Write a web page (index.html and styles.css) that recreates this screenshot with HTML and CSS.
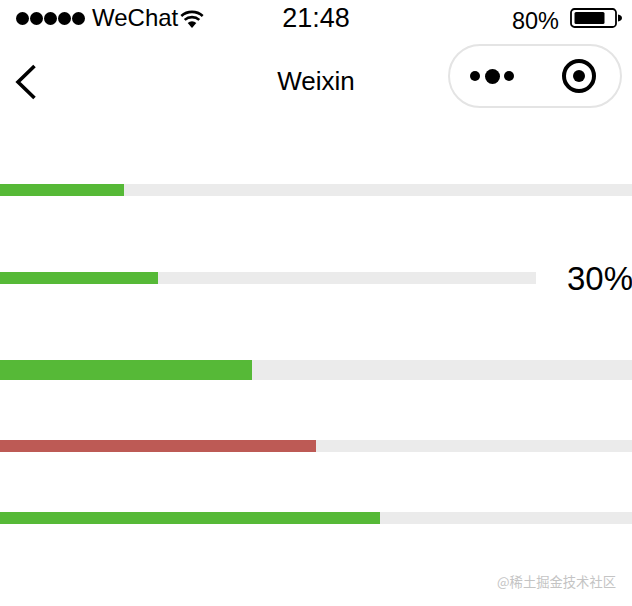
FILE: index.html
```html
<!DOCTYPE html>
<html lang="en">
<head>
  <meta charset="UTF-8" />
  <title>Weixin</title>
  <link rel="stylesheet" href="styles.css">
</head>
<body>
  <header class="status-bar">
    <div class="status-left">
      <span class="signal"><i></i><i></i><i></i><i></i><i></i></span>
      <span class="carrier">WeChat</span>
      <svg class="wifi" width="24" height="18" viewBox="0 0 24 18">
        <path d="M12 18 7.700 13a6.400 6.400 0 0 1 8.600 0z" fill="#000"/>
        <path d="M4.700 9.900a11 11 0 0 1 14.600 0M1.300 6a16 16 0 0 1 21.400 0" fill="none" stroke="#000" stroke-width="2.600"/>
      </svg>
    </div>
    <div class="status-time">21:48</div>
    <div class="status-right">
      <span class="percent">80%</span>
      <svg class="battery" width="52" height="20" viewBox="0 0 52 20">
        <rect x="1" y="1" width="45" height="18" rx="3.500" fill="none" stroke="#000" stroke-width="1.800"/>
        <rect x="4.500" y="4" width="30" height="12" rx="1.500" fill="#000"/>
        <path d="M48 6.500c2.500.4 4 1.800 4 3.500s-1.500 3.100-4 3.500z" fill="#000"/>
      </svg>
    </div>
  </header>

  <nav class="nav-bar">
    <svg class="back" width="22" height="36" viewBox="0 0 22 36">
      <path d="M19.500 2 3 18l16.500 16" fill="none" stroke="#000" stroke-width="3.600"/>
    </svg>
    <div class="nav-title">Weixin</div>
    <div class="capsule">
      <span class="dots"><i></i><i class="big"></i><i></i></span>
      <span class="target"><i></i></span>
    </div>
  </nav>

  <main class="progress-list">
    <div class="progress row-1">
      <div class="track"><div class="fill" style="width: 124px"></div></div>
    </div>
    <div class="progress row-2">
      <div class="track"><div class="fill" style="width: 158px"></div></div>
      <div class="info">30%</div>
    </div>
    <div class="progress row-3">
      <div class="track thick"><div class="fill" style="width: 252px"></div></div>
    </div>
    <div class="progress row-4">
      <div class="track"><div class="fill red" style="width: 316px"></div></div>
    </div>
    <div class="progress row-5">
      <div class="track"><div class="fill" style="width: 380px"></div></div>
    </div>
  </main>

  <div class="watermark">@稀土掘金技术社区</div>
</body>
</html>
```

FILE: styles.css
```css
html, body {
  height: 100%;
}
body {
  margin: 0;
  position: relative;
  overflow: hidden;
  background: #fff;
  color: #000;
  font-family: 'Liberation Sans', sans-serif;
}
.status-bar {
  height: 44px;
  display: grid;
  grid-template-columns: 1fr auto 1fr;
  align-items: center;
  padding: 0 10px 8px 16px;
  box-sizing: border-box;
}
.status-left {
  display: flex;
  align-items: center;
}
.signal {
  display: flex;
  gap: 1px;
}
.signal i {
  width: 13px;
  height: 13px;
  border-radius: 50%;
  background: #000;
}
.carrier {
  font-size: 24px;
  margin-left: 7px;
}
.wifi {
  margin-left: 2px;
  margin-top: 1px;
}
.status-time {
  font-size: 27px;
  margin-left: -6px;
}
.status-right {
  display: flex;
  justify-content: flex-end;
  align-items: center;
  padding-top: 3px;
}
.percent {
  font-size: 23.500px;
  margin-top: 3px;
  margin-right: 11px;
}
.battery {
  margin-top: -3px;
}
.nav-bar {
  height: 64px;
  position: relative;
  display: flex;
  align-items: center;
  justify-content: space-between;
  padding: 0 10px 0 15px;
}
.nav-title {
  position: absolute;
  left: 0;
  right: 0;
  top: 22px;
  text-align: center;
  font-size: 26px;
}
.back {
  margin-top: 11px;
}
.capsule {
  width: 174px;
  height: 64px;
  box-sizing: border-box;
  border: 2px solid #e4e4e4;
  border-radius: 32px;
  display: flex;
  align-items: center;
  padding: 0 24px 0 20px;
  justify-content: space-between;
}
.dots {
  display: flex;
  align-items: center;
  gap: 4.500px;
}
.dots i {
  width: 10px;
  height: 10px;
  border-radius: 50%;
  background: #000;
}
.dots i.big {
  width: 15px;
  height: 15px;
}
.target {
  width: 34px;
  height: 34px;
  box-sizing: border-box;
  border: 4.500px solid #000;
  border-radius: 50%;
  display: flex;
  align-items: center;
  justify-content: center;
}
.target i {
  width: 12px;
  height: 12px;
  border-radius: 50%;
  background: #000;
}
.progress {
  display: flex;
  align-items: center;
}
.row-1 { margin-top: 76px; }
.row-2 { margin-top: 76px; }
.row-3 { margin-top: 76px; }
.row-4 { margin-top: 60px; }
.row-5 { margin-top: 60px; }
.track {
  flex: 1;
  height: 12px;
  background: #ebebeb;
}
.track.thick {
  height: 20px;
}
.fill {
  height: 100%;
  background: #56b937;
}
.fill.red {
  background: #bd5a55;
}
.info {
  width: 65px;
  height: 12px;
  margin-left: 31px;
  font-size: 33px;
  line-height: 14px;
  white-space: nowrap;
}
.watermark {
  position: absolute;
  right: 16px;
  bottom: 15px;
  font-family: 'Noto Sans CJK SC', sans-serif;
  font-size: 13.300px;
  color: #c4c4c4;
}
```
